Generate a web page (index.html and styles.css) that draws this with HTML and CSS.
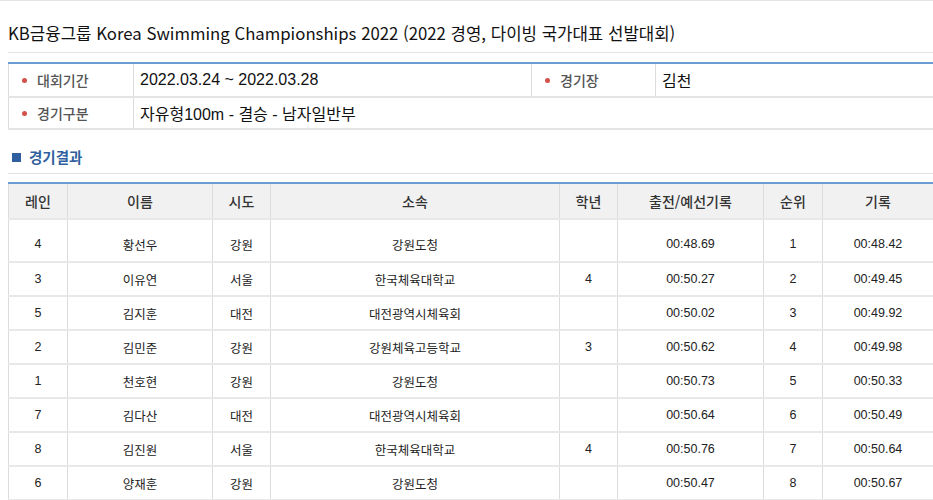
FILE: index.html
```html
<!DOCTYPE html>
<html lang="ko">
<head>
<meta charset="utf-8">
<title>경기결과</title>
<link rel="stylesheet" href="styles.css">
</head>
<body>
<div class="page">
  <h1 class="title">KB금융그룹 Korea Swimming Championships 2022 (2022 경영, 다이빙 국가대표 선발대회)</h1>

  <table class="info">
    <colgroup>
      <col class="c-label"><col class="c-val1"><col class="c-label2"><col class="c-val2">
    </colgroup>
    <tr class="r1">
      <th><span class="dot"></span>대회기간</th>
      <td>2022.03.24 ~ 2022.03.28</td>
      <th><span class="dot"></span>경기장</th>
      <td>김천</td>
    </tr>
    <tr class="r2">
      <th><span class="dot"></span>경기구분</th>
      <td colspan="3">자유형100m - 결승 - 남자일반부</td>
    </tr>
  </table>

  <h2 class="section"><span class="sq"></span>경기결과</h2>

  <table class="results">
    <colgroup>
      <col style="width:59px"><col style="width:145px"><col style="width:58px"><col style="width:289px">
      <col style="width:58px"><col style="width:146px"><col style="width:59px"><col style="width:111px">
    </colgroup>
    <thead>
      <tr><th>레인</th><th>이름</th><th>시도</th><th>소속</th><th>학년</th><th>출전/예선기록</th><th>순위</th><th>기록</th></tr>
    </thead>
    <tbody>
      <tr class="first"><td>4</td><td>황선우</td><td>강원</td><td>강원도청</td><td></td><td>00:48.69</td><td>1</td><td>00:48.42</td></tr>
      <tr><td>3</td><td>이유연</td><td>서울</td><td>한국체육대학교</td><td>4</td><td>00:50.27</td><td>2</td><td>00:49.45</td></tr>
      <tr><td>5</td><td>김지훈</td><td>대전</td><td>대전광역시체육회</td><td></td><td>00:50.02</td><td>3</td><td>00:49.92</td></tr>
      <tr><td>2</td><td>김민준</td><td>강원</td><td>강원체육고등학교</td><td>3</td><td>00:50.62</td><td>4</td><td>00:49.98</td></tr>
      <tr><td>1</td><td>천호현</td><td>강원</td><td>강원도청</td><td></td><td>00:50.73</td><td>5</td><td>00:50.33</td></tr>
      <tr><td>7</td><td>김다산</td><td>대전</td><td>대전광역시체육회</td><td></td><td>00:50.64</td><td>6</td><td>00:50.49</td></tr>
      <tr><td>8</td><td>김진원</td><td>서울</td><td>한국체육대학교</td><td>4</td><td>00:50.76</td><td>7</td><td>00:50.64</td></tr>
      <tr><td>6</td><td>양재훈</td><td>강원</td><td>강원도청</td><td></td><td>00:50.47</td><td>8</td><td>00:50.67</td></tr>
    </tbody>
  </table>
</div>
</body>
</html>
```

FILE: styles.css
```css
html, body {
  margin: 0;
  padding: 0;
  overflow: hidden;
  background: #fff;
}

body {
  font-family: "Liberation Sans", "Noto Sans CJK KR", sans-serif;
  color: #222;
  border-top: 1px solid #e4e4e4;
}

.page {
  padding: 0 0 0 8px;
}

.title {
  margin: 0;
  padding: 20px 0 7px;
  font-family: "Noto Sans CJK KR", sans-serif;
  font-size: 16.75px;
  line-height: 24px;
  font-weight: 400;
  color: #111;
  border-bottom: 1px solid #e2e2e2;
  white-space: nowrap;
}

table {
  border-collapse: collapse;
  table-layout: fixed;
}

.info {
  margin-top: 9px;
  width: 940px;
  border-top: 2px solid #6a9bd3;
}

.info .c-label { width: 125px; }
.info .c-val1 { width: 398px; }
.info .c-label2 { width: 124px; }

.info th,
.info td {
  padding: 0;
  border: 1px solid #dcdcdc;
  border-top: 0;
  border-bottom: 2px solid #e4e4e4;
  vertical-align: middle;
  text-align: left;
}

.info .r1 th,
.info .r1 td {
  height: 32px;
}

.info .r2 th,
.info .r2 td {
  height: 30px;
}

.info th {
  font-family: "Noto Sans CJK KR", sans-serif;
  font-weight: 500;
  font-size: 14px;
  color: #555;
  padding-left: 13px;
}

.info td {
  font-family: "Liberation Sans", "Noto Sans CJK KR", sans-serif;
  font-size: 16px;
  color: #111;
  padding-left: 6px;
}

.dot {
  display: inline-block;
  width: 5px;
  height: 5px;
  border-radius: 50%;
  background: #d2514a;
  margin-right: 10px;
  vertical-align: 3px;
}

.section {
  margin: 18px 0 0;
  padding: 0 0 7px;
  font-family: "Noto Sans CJK KR", sans-serif;
  font-size: 14.5px;
  line-height: 18px;
  font-weight: 700;
  color: #2f5f9e;
  border-bottom: 1px solid #e2e2e2;
  display: flex;
  align-items: center;
}

.sq {
  display: inline-block;
  width: 9px;
  height: 9px;
  background: #2f5f9e;
  margin: 0 8px 0 4px;
}

.results {
  margin-top: 8px;
  width: 925px;
  border-top: 2px solid #6a9bd3;
}

.results th,
.results td {
  padding: 0;
  text-align: center;
  vertical-align: middle;
  border-left: 1px solid #dcdcdc;
  border-right: 1px solid #dcdcdc;
  border-bottom: 2px solid #e8e8e8;
}

.results th {
  height: 34px;
  background: #f1f1f1;
  font-family: "Noto Sans CJK KR", sans-serif;
  font-weight: 500;
  font-size: 14px;
  color: #333;
}

.results td {
  height: 32px;
  font-size: 12.5px;
  color: #222;
}

.results tr.first td {
  height: 34px;
  padding-top: 7px;
}
```
